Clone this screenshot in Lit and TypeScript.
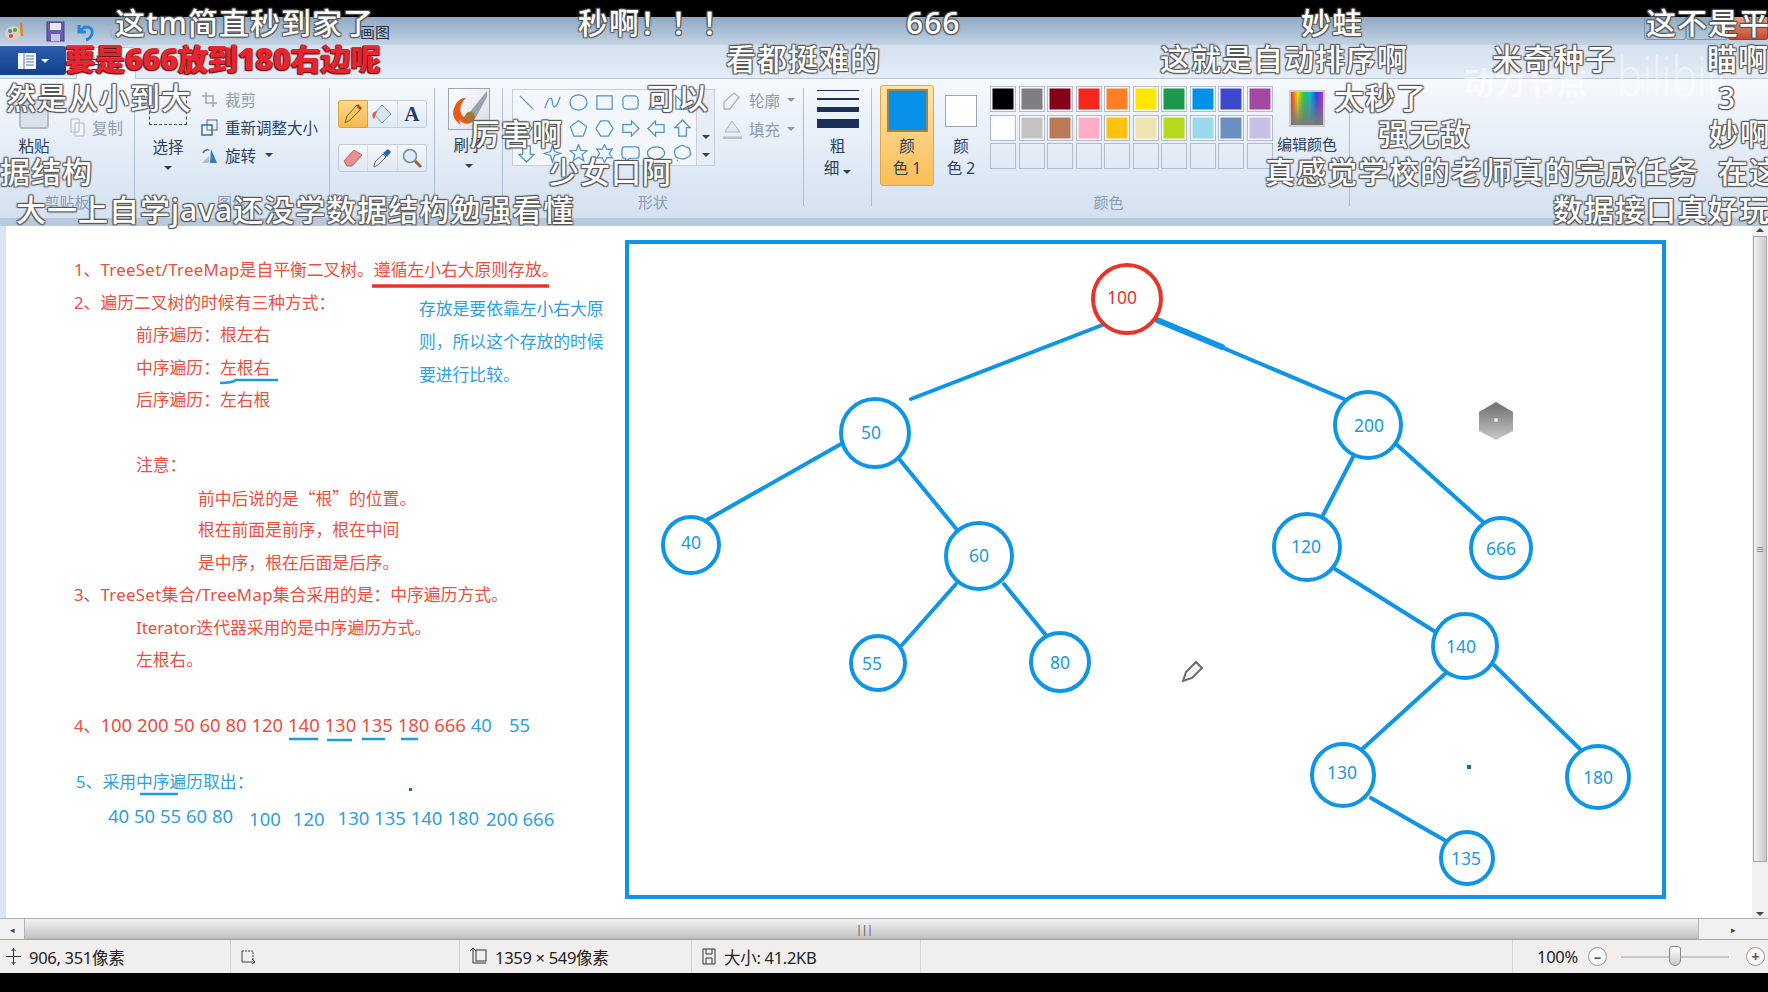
import { LitElement, html, css, svg } from 'lit';
import { customElement } from 'lit/decorators.js';

// x, row, text (row is the danmaku lane)
const DANMAKU: [number, number, string, boolean?][] = [
  [115, 0, '这tm简直秒到家了'], [578, 0, '秒啊！！！'], [906, 0, '666'], [1301, 0, '妙蛙'], [1646, 0, '这不是平'],
  [65, 1, '要是666放到180右边呢', true], [726, 1, '看都挺难的'], [1160, 1, '这就是自动排序啊'], [1492, 1, '米奇种子'], [1707, 1, '瞄啊'],
  [6, 2, '然是从小到大'], [647, 2, '可以'], [1334, 2, '太秒了'], [1718, 2, '3'],
  [470, 3, '厉害啊'], [1378, 3, '强无敌'], [1709, 3, '妙啊'],
  [0, 4, '据结构'], [549, 4, '少女口阿'], [1265, 4, '真感觉学校的老师真的完成任务'], [1718, 4, '在这'],
  [16, 5, '大一上自学java还没学数据结构勉强看懂'], [1553, 5, '数据接口真好玩'],
];
const LANES = [4, 40, 79, 115, 153, 191];

const PALETTE = [
  '#000000', '#7f7f7f', '#880015', '#f5281e', '#ff7f27', '#ffe600', '#1a9a4a', '#0091e8', '#3f48cc', '#a349a4',
  '#ffffff', '#c3c3c3', '#b97a57', '#ffaec9', '#ffc20e', '#efe4b0', '#b5d91d', '#99d9ea', '#6a8fc0', '#c8bfe7',
  ...Array(10).fill(''),
];

const EDGES = [
  [1105, 324, 911, 399], [1157, 320, 1344, 399], [841, 444, 705, 521], [900, 460, 958, 531],
  [1353, 457, 1320, 521], [1396, 444, 1483, 522], [956, 584, 902, 645], [1004, 584, 1049, 639],
  [1335, 569, 1434, 631], [1446, 673, 1359, 752], [1494, 665, 1584, 753], [1371, 798, 1446, 841],
];

// cx, cy, r, label, label x, label y
const NODES: [number, number, number, string, number, number][] = [
  [875, 433, 34, '50', 871, 432], [1368, 425, 33, '200', 1369, 425], [691, 545, 28, '40', 691, 542],
  [979, 556, 33, '60', 979, 555], [1307, 547, 33, '120', 1306, 546], [1501, 548, 30, '666', 1501, 548],
  [878, 663, 27, '55', 872, 663], [1060, 662, 29, '80', 1060, 662], [1465, 646, 32, '140', 1461, 646],
  [1343, 775, 31, '130', 1342, 772], [1598, 777, 31, '180', 1598, 777], [1467, 858, 26, '135', 1466, 858],
];

// last line of the notes: text, left margin, top margin
const INORDER: [string, number, number][] = [
  ['40 50 55 60 80', 0, 0], ['100', 16, 3], ['120', 12, 3], ['130 135 140 180', 13, 2], ['200 666', 7, 3],
];

const star = (n: number, R: number, r: number) =>
  Array.from({ length: n * 2 }, (_, i) => {
    const a = (Math.PI * i) / n - Math.PI / 2;
    const d = i % 2 ? r : R;
    return `${(10 + d * Math.cos(a)).toFixed(1)},${(10 + d * Math.sin(a)).toFixed(1)}`;
  }).join(' ');

const SHAPES = [
  svg`<path d="M3 3L17 17"/>`,
  svg`<path d="M2 16C6 3 9 3 10 10S14 17 18 4"/>`,
  svg`<ellipse cx="10" cy="10" rx="9" ry="8"/>`,
  svg`<rect x="2" y="3" width="16" height="14"/>`,
  svg`<rect x="2" y="3" width="16" height="14" rx="4"/>`,
  svg`<path d="M10 3L18 17H2Z"/>`,
  svg`<path d="M3 3V17H18Z"/>`,
  svg`<path d="M3 4L9 3L16 9L11 17H4Z"/>`,
  svg`<path d="M10 2L18 10L10 18L2 10Z"/>`,
  svg`<path d="M10 1.500L18.500 8L15 18H5L1.500 8Z"/>`,
  svg`<path d="M6 2H14L19 10L14 18H6L1 10Z"/>`,
  svg`<path d="M2 6H11V2L19 10L11 18V14H2Z"/>`,
  svg`<path d="M18 6H9V2L1 10L9 18V14H18Z"/>`,
  svg`<path d="M6 18V9H2L10 1L18 9H14V18Z"/>`,
  svg`<path d="M6 2V11H2L10 19L18 11H14V2Z"/>`,
  svg`<polygon points="${star(4, 9, 3)}"/>`,
  svg`<polygon points="${star(5, 9.5, 4)}"/>`,
  svg`<polygon points="${star(6, 9.5, 5)}"/>`,
  svg`<path d="M4 3H16Q19 3 19 6V12Q19 15 16 15H9L5 19V15H4Q1 15 1 12V6Q1 3 4 3Z"/>`,
  svg`<path d="M6 15.500A9 6.500 0 1 1 10 16L5 19Z"/>`,
  svg`<path d="M6 3Q10 0 13 3Q18 3 18 8Q20 12 15 14Q11 17 7 15Q2 15 2 10Q0 6 6 3ZM4 17L5 18"/>`,
];

@customElement('app-root')
export class AppRoot extends LitElement {
  static override styles = css`
    :host {
      display: block;
      position: relative;
      width: 1768px;
      height: 992px;
      overflow: hidden;
      background: #000;
      font-family: "Noto Sans", "Noto Sans CJK SC", sans-serif;
      color: #2b3f5e;
      font-size: 15.500px;
    }
    .window { display: flex; flex-direction: column; height: 973px; padding-top: 17px; box-sizing: border-box; }

    .title {
      height: 28px;
      flex: none;
      display: flex;
      align-items: center;
      background: linear-gradient(#8fa9c3, #c3d3e4);
      position: relative;
    }
    .quick { display: flex; align-items: center; gap: 10px; padding-left: 4px; }
    .quick svg { display: block; }
    .title-text { margin-left: 236px; font-size: 15px; color: #26323f; }
    .controls { position: absolute; right: 0; top: 0; display: flex; height: 23px; }
    .ctl { width: 42px; border: 1px solid #7f99b3; border-top: 0; border-radius: 0 0 3px 3px; box-sizing: border-box; }
    .ctl.close { width: 40px; background: linear-gradient(#e8a08a, #c8482e); border-color: #96402c; }

    .tabs { height: 34px; flex: none; display: flex; align-items: flex-end; background: linear-gradient(#d5e1ef, #e4edf7); border-bottom: 1px solid #b9c9da; box-sizing: border-box; }
    .file {
      width: 66px;
      height: 29px;
      margin-bottom: 3px;
      display: flex;
      align-items: center;
      justify-content: center;
      gap: 5px;
      background: linear-gradient(#2c5fae, #123f8c);
      border-radius: 0 3px 3px 0;
    }
    .caret { width: 0; height: 0; border: 4px solid transparent; border-top: 4px solid currentColor; border-bottom: 0; display: inline-block; }
    .file .caret { color: #fff; }
    .tab { width: 60px; height: 32px; margin-left: 10px; margin-bottom: -1px; background: #f5f8fc; border: 1px solid #b9c9da; border-bottom: 0; border-radius: 3px 3px 0 0; box-sizing: border-box; text-align: center; line-height: 30px; }

    .ribbon {
      height: 139px;
      flex: none;
      display: flex;
      box-sizing: border-box;
      padding-top: 9px;
      background: linear-gradient(#f6f9fd, #d4e1f1);
    }
    .group { height: 118px; display: flex; flex-direction: column; border-right: 1px solid #afbfd2; box-sizing: border-box; flex: none; }
    .body { flex: 1; display: flex; min-height: 0; }
    .glabel { height: 18px; line-height: 28px; text-align: center; font-size: 15px; color: #8c9db3; flex: none; }
    .col { display: flex; flex-direction: column; align-items: center; flex: none; }
    .muted { color: #8f9cad; }
    .big-label { line-height: 22px; text-align: center; }
    .row-item { height: 22px; display: flex; align-items: center; gap: 7px; white-space: nowrap; }
    .row-item svg { flex: none; }
    .stack { display: flex; flex-direction: column; gap: 6px; }

    .paste-icon { width: 30px; height: 30px; margin-top: 11px; margin-bottom: 6px; border: 2px solid #b3bdca; border-radius: 3px; background: #d9e1ea; box-sizing: border-box; }
    .select-icon { width: 38px; height: 30px; margin: 7px 0 11px; border: 1px dashed #38517a; box-sizing: border-box; }

    .tools { display: flex; flex-direction: column; gap: 16px; padding: 12px 0 0 8px; }
    .toolrow { display: flex; width: 89px; height: 28px; border: 1px solid #c0ccd9; border-radius: 3px; box-sizing: border-box; background: linear-gradient(#f5f8fc, #dfe8f3); }
    .toolrow > div { flex: 1; display: flex; align-items: center; justify-content: center; border-right: 1px solid #d3dce7; font-family: "Liberation Serif", serif; font-weight: 700; font-size: 21px; color: #20386a; }
    .toolrow > div:last-child { border-right: 0; }
    .toolrow > .on { background: linear-gradient(#fdd98b, #f7b84e); border: 1px solid #d8a545; margin: -1px 0 -1px -1px; border-radius: 3px 0 0 3px; }

    .brush { width: 42px; height: 42px; margin-bottom: 4px; border: 1px solid #9aa6b4; background: linear-gradient(135deg, #fff, #d8dde3); box-sizing: border-box; }

    .shapes { padding: 1px 0 0 9px; }
    .gallery { width: 184px; height: 77px; display: grid; grid-template-columns: repeat(7, 26px); grid-auto-rows: 25.600px; background: #f3f7fc; border: 1px solid #c4d0de; border-right: 0; box-sizing: border-box; justify-items: center; align-items: center; }
    .gallery svg { width: 19px; height: 19px; fill: none; stroke: #4d93cb; stroke-width: 1.300; }
    .scroller { width: 19px; height: 77px; border: 1px solid #c4d0de; box-sizing: border-box; display: flex; flex-direction: column; align-items: center; justify-content: flex-end; gap: 14px; padding-bottom: 8px; background: #e6edf6; color: #33435a; }
    .shape-opts { margin-left: 8px; display: flex; flex-direction: column; gap: 7px; }

    .thick-col { flex: 1; }
    .thick { display: flex; flex-direction: column; width: 42px; margin: 2px 0 0 13px; }
    .thick i { display: block; background: #1c3157; }
    .thick-label { margin-top: 7px; }

    .colors { padding-left: 8px; }
    .color-btn { width: 54px; height: 101px; margin-top: -3px; box-sizing: border-box; display: flex; flex-direction: column; align-items: center; border: 1px solid transparent; border-radius: 3px; flex: none; }
    .color-btn.on { background: linear-gradient(#ffe3a4, #fbbd57); border-color: #dca94f; }
    .swatch1 { width: 41px; height: 43px; margin-top: 3px; margin-bottom: 3px; background: #0891e8; border: 2px solid #98805a; box-sizing: border-box; }
    .swatch2 { width: 32px; height: 32px; margin: 9px 0 8px; background: #fff; border: 1px solid #9aa6b4; box-sizing: border-box; }
    .palette { margin: -2px 0 0 2px; display: grid; grid-template-columns: repeat(10, 28.500px); grid-auto-rows: 28.700px; flex: none; }
    .cell { width: 26px; height: 26px; border: 1px solid #b4bcc8; box-sizing: border-box; }
    .cell.filled { box-shadow: inset 0 0 0 1.500px #f4f7fb; }
    .edit { width: 60px; margin-left: 2px; align-items: center; display: flex; flex-direction: column; flex: none; }
    .edit-label { font-size: 15px; white-space: nowrap; }
    .rainbow { width: 36px; height: 37px; margin: 2px 0 6px; border: 2px solid #c9ced6; box-sizing: border-box; background: linear-gradient(transparent, #7a7a7a), linear-gradient(90deg, #f22, #fd0, #2c4, #0bd, #24d, #c2c); }

    .work { flex: 1; min-height: 0; display: flex; flex-direction: column; background: #dbe5f1; border-top: 8px solid #b9c8da; box-sizing: border-box; }
    .work-main { flex: 1; min-height: 0; display: flex; padding-left: 6px; }
    .canvas { flex: 1; position: relative; background: #fff; overflow: hidden; box-sizing: border-box; padding: 28px 0 0 68px; color: #e8503f; font-size: 16.800px; line-height: 32.500px; }
    .line { height: 32.500px; white-space: nowrap; }
    .i1 { padding-left: 62px; }
    .i2 { padding-left: 124px; }
    .lat { letter-spacing: 0.350px; }
    .q { font-family: "Noto Sans CJK SC", sans-serif; }
    .blue { color: #2f9fe0; }
    .digits { font-size: 18.500px; }
    .small { font-size: 16.800px; }
    .sp { margin-left: 17px; }
    .gap-a { margin-top: 24px; }
    .five { padding-left: 2px; }
    .nums { margin-top: 2px; padding-left: 34px; display: flex; align-items: flex-start; }
    .side-note { position: absolute; left: 413px; top: 66px; color: #2f9fe0; line-height: 33px; }
    .drawing { position: absolute; left: 0; top: 0; width: 1746px; height: 692px; }
    .drawing text { font-size: 17.500px; text-anchor: middle; dominant-baseline: central; fill: #1a9ae0; font-family: "Noto Sans", sans-serif; }
    .drawing text.root { fill: #e5352b; }

    .vbar { width: 16px; flex: none; background: #f0f0f0; display: flex; flex-direction: column; align-items: center; padding: 2px 0; box-sizing: border-box; color: #444; }
    .vthumb { width: 14px; height: 626px; margin-top: 4px; background: linear-gradient(90deg, #f2f2f2, #c8c8c8); border: 1px solid #a9a9a9; box-sizing: border-box; display: flex; align-items: center; justify-content: center; font-size: 9px; color: #555; }
    .vspace { flex: 1; }
    .up { transform: rotate(180deg); }
    .hbar { height: 21px; flex: none; display: flex; align-items: center; background: #f0f0f0; border-top: 1px solid #b0b0b0; box-sizing: border-box; color: #444; }
    .harrow { width: 24px; text-align: center; font-size: 9px; flex: none; }
    .hthumb { flex: 1; height: 20px; background: linear-gradient(#f2f2f2, #c4c4c4); border: 1px solid #b4b4b4; border-top: 0; box-sizing: border-box; display: flex; justify-content: center; align-items: center; padding-left: 6px; font-size: 10px; }
    .harrow.right { width: 69px; }

    .status { height: 34px; flex: none; display: flex; align-items: center; background: #f1efee; border-top: 1px solid #a6a6a6; box-sizing: border-box; font-size: 16.500px; letter-spacing: -0.300px; color: #222; }
    .cell-s { height: 100%; display: flex; align-items: center; gap: 8px; padding-left: 6px; box-sizing: border-box; border-right: 1px solid #d6d4d2; flex: none; }
    .s1 { width: 231px; }
    .s2 { width: 229px; padding-left: 8px; }
    .s3 { width: 232px; padding-left: 10px; }
    .s4 { width: 229px; padding-left: 10px; }
    .s5 { width: 592px; }
    .zoom { flex: 1; display: flex; align-items: center; padding-left: 24px; }
    .round { width: 19px; height: 19px; border: 1px solid #999; border-radius: 50%; display: flex; align-items: center; justify-content: center; font-weight: 700; font-size: 14px; color: #555; box-sizing: border-box; background: #f6f6f6; }
    .minus { margin-left: 10px; }
    .track { position: relative; width: 108px; height: 2px; background: #c8c8c8; margin: 0 17px 0 14px; }
    .knob { position: absolute; left: 48px; top: -10px; width: 12px; height: 20px; border: 1px solid #8a8a8a; border-radius: 3px 3px 6px 6px; background: linear-gradient(#fff, #c9c9c9); box-sizing: border-box; }

    .danmaku { position: absolute; white-space: nowrap; font-size: 30px; line-height: 38px; letter-spacing: 1px; font-weight: 500; color: #fff; text-shadow: 1px 1px 1px #555, -1px -1px 1px #555, 1px -1px 1px #555, -1px 1px 1px #555; }
    .danmaku.red { color: #e8252f; font-weight: 900; letter-spacing: 0; text-shadow: 1px 1px 1px #611, -1px 1px 1px #611; }
    .mark { position: absolute; color: #fff; white-space: nowrap; }
    .mark.a { left: 1463px; top: 60px; font-size: 31px; line-height: 44px; font-weight: 700; opacity: 0.5; }
    .mark.b { left: 1617px; top: 47px; font-size: 42px; line-height: 55px; font-weight: 300; opacity: 0.4; transform: scaleY(1.300); }
  `;

  private renderDrawing() {
    return svg`
      <svg class="drawing" viewBox="6 226 1746 692">
        <defs>
          <linearGradient id="hex" x1="0" y1="0" x2="0" y2="1">
            <stop offset="0" stop-color="#6c6c6c"/>
            <stop offset="1" stop-color="#c9c9c9"/>
          </linearGradient>
        </defs>
        <rect x="627" y="242" width="1037" height="655" fill="none" stroke="#0f95e6" stroke-width="4"/>
        <path d="M372 286H549" stroke="#e5352b" stroke-width="3.500"/>
        <g stroke="#1a9ae0" stroke-width="2.500" fill="none">
          <path d="M220 383Q232 383 236 380H278"/>
          <path d="M289 739H318M327 740H352M362 739H385M401 739H418M140 794H178"/>
        </g>
        <g stroke="#0f95e6" stroke-width="4" stroke-linecap="round">
          ${EDGES.map(([a, b, c, d]) => svg`<line x1=${a} y1=${b} x2=${c} y2=${d}/>`)}
          <line x1="1157" y1="320" x2="1222" y2="347" stroke-width="6"/>
        </g>
        <circle cx="1127" cy="299" r="34" fill="#fff" stroke="#e5352b" stroke-width="4"/>
        <text class="root" x="1122" y="297">100</text>
        ${NODES.map(([x, y, r, t, tx, ty]) => svg`
          <circle cx=${x} cy=${y} r=${r} fill="#fff" stroke="#0f95e6" stroke-width="4"/>
          <text x=${tx} y=${ty}>${t}</text>`)}
        <rect x="1467" y="765" width="4" height="4" fill="#0b6fa8"/>
        <rect x="409" y="788" width="3" height="3" fill="#0b6fa8"/>
        <path d="M1496 402L1513 412V431L1496 440L1479 431V412Z" fill="url(#hex)"/>
        <circle cx="1496" cy="420" r="2" fill="#e4e4e4"/>
        <path d="M1183 681L1186 672L1196 662L1202 668L1192 678Z" fill="#f4f4f4" stroke="#6a6a6a" stroke-width="2"/>
      </svg>`;
  }

  override render() {
    return html`
      <div class="window">
        <div class="title">
          <div class="quick">
            <svg width="20" height="22" viewBox="0 0 20 22"><ellipse cx="9" cy="13" rx="8" ry="7" fill="#d9d0b8"/><circle cx="6" cy="11" r="2" fill="#3a8fd8"/><circle cx="11" cy="10" r="2" fill="#4a4"/><circle cx="7" cy="16" r="2" fill="#d44"/><path d="M17 3L18 16" stroke="#d78a1e" stroke-width="2.500"/></svg>
            <svg style="margin-left:12px" width="19" height="21" viewBox="0 0 19 21"><rect x="1" y="1" width="17" height="19" fill="#6d5bb0" stroke="#4a3a86"/><rect x="4" y="2" width="11" height="7" fill="#e8e8f4"/><rect x="5" y="13" width="9" height="7" fill="#c9c4e2"/></svg>
            <svg style="margin-left:2px" width="18" height="21" viewBox="0 0 18 21"><path d="M2 4V11H9M3 10C8 3 17 6 15 13C14 16 12 18 9 19" fill="none" stroke="#2b86d8" stroke-width="3"/></svg>
            <svg style="margin-left:3px" width="16" height="21" viewBox="0 0 18 21"><path d="M16 4V11H9M15 10C10 3 1 6 3 13C4 16 6 18 9 19" fill="none" stroke="#a9b7c6" stroke-width="3"/></svg>
          </div>
          <span class="title-text">画图</span>
          <div class="controls"><div class="ctl"></div><div class="ctl"></div><div class="ctl close"></div></div>
        </div>

        <div class="tabs">
          <div class="file">
            <svg width="18" height="16" viewBox="0 0 18 16"><rect width="18" height="16" fill="#f4f7fb"/><path d="M6 0V16M8 3H16M8 6H16M8 9H16M8 12H16" stroke="#5a7db0"/></svg>
            <span class="caret"></span>
          </div>
          <div class="tab">主页</div>
        </div>

        <div class="ribbon">
          <div class="group" style="width:135px">
            <div class="body">
              <div class="col" style="width:68px">
                <div class="paste-icon"></div>
                <div class="big-label">粘贴</div>
              </div>
              <div class="stack muted" style="padding:28px 0 0 2px">
                <div class="row-item">
                  <svg width="15" height="19" viewBox="0 0 15 19"><path d="M1 1H9V14H1ZM5 5H14V18H5Z" fill="#f4f6f9" stroke="#aeb7c3"/></svg>复制
                </div>
              </div>
            </div>
            <div class="glabel">剪贴板</div>
          </div>

          <div class="group" style="width:195px">
            <div class="body">
              <div class="col" style="width:66px">
                <div class="select-icon"></div>
                <div class="big-label">选择</div>
                <span class="caret" style="margin-top:8px"></span>
              </div>
              <div class="stack">
                <div class="row-item muted">
                  <svg width="17" height="17" viewBox="0 0 17 17"><path d="M5 1V12H16M1 5H12V16" fill="none" stroke="#9aa7b6" stroke-width="1.500"/></svg>裁剪
                </div>
                <div class="row-item">
                  <svg width="17" height="17" viewBox="0 0 17 17"><rect x="1" y="6" width="10" height="10" fill="#f5f8fc" stroke="#2b6fb8" stroke-width="1.500"/><rect x="6" y="1" width="10" height="10" fill="none" stroke="#5a6b80"/></svg>重新调整大小
                </div>
                <div class="row-item">
                  <svg width="17" height="17" viewBox="0 0 17 17"><path d="M1 16L8 9V16Z" fill="#b9b9b9"/><path d="M10 2L16 16H9Z" fill="#2b7fd0"/><path d="M2 6Q4 2 8 3" fill="none" stroke="#2b7fd0" stroke-width="1.500"/></svg>旋转
                  <span class="caret" style="margin-left:2px"></span>
                </div>
              </div>
            </div>
            <div class="glabel">图像</div>
          </div>

          <div class="group" style="width:105px">
            <div class="body">
              <div class="tools">
                <div class="toolrow">
                  <div class="on"><svg width="20" height="22" viewBox="0 0 20 22"><path d="M2 20L4 13L14 2L18 6L7 17Z" fill="#f7c94b" stroke="#8a5a20"/><path d="M14 2L18 6" stroke="#c8402e" stroke-width="3"/></svg></div>
                  <div><svg width="22" height="22" viewBox="0 0 22 22"><path d="M11 2L20 11L11 20L3 11Z" fill="#d5e6f5" stroke="#7f9ab8"/><path d="M3 9C0 12 2 15 3 16C5 13 4 11 7 8Z" fill="#e2622a"/></svg></div>
                  <div>A</div>
                </div>
                <div class="toolrow">
                  <div><svg width="22" height="20" viewBox="0 0 22 20"><path d="M2 13L12 2L20 7L10 18H5Z" fill="#ec8f8c" stroke="#b06a68"/></svg></div>
                  <div><svg width="22" height="22" viewBox="0 0 22 22"><path d="M3 20L4 15L12 7L15 10L7 18Z" fill="#e8eef5" stroke="#667"/><path d="M12 6L17 2L20 5L16 10Z" fill="#2a63b0"/></svg></div>
                  <div><svg width="22" height="22" viewBox="0 0 22 22"><circle cx="9" cy="9" r="6.500" fill="#dcebf7" stroke="#7a8898" stroke-width="1.500"/><path d="M14 14L20 20" stroke="#9a6a32" stroke-width="3"/></svg></div>
                </div>
              </div>
            </div>
            <div class="glabel">工具</div>
          </div>

          <div class="group" style="width:68px">
            <div class="body">
              <div class="col" style="width:68px">
                <div class="brush">
                  <svg width="40" height="40" viewBox="0 0 40 40"><path d="M38 2L20 24L26 30L38 8Z" fill="#9aa4b0"/><path d="M18 24C22 20 28 26 25 31C22 36 14 36 11 31C10 33 12 36 12 36C7 33 1 26 6 17C8 12 14 8 17 9C11 14 9 24 15 28Z" fill="#e8591c"/><path d="M18 24C22 20 28 26 25 31C22 35 17 33 16 30Z" fill="#a5773d"/></svg>
                </div>
                <div class="big-label">刷子</div>
                <span class="caret" style="margin-top:8px"></span>
              </div>
            </div>
          </div>

          <div class="group" style="width:301px">
            <div class="body shapes">
              <div class="gallery">
                ${SHAPES.map(s => svg`<svg viewBox="0 0 20 20">${s}</svg>`)}
              </div>
              <div class="scroller"><span class="caret"></span><span class="caret"></span></div>
              <div class="shape-opts muted">
                <div class="row-item">
                  <svg width="19" height="19" viewBox="0 0 19 19"><path d="M1 18V11L11 2L16 6L7 18Z" fill="none" stroke="#a9b4c2" stroke-width="1.300"/></svg>轮廓<span class="caret"></span>
                </div>
                <div class="row-item">
                  <svg width="19" height="19" viewBox="0 0 19 19"><path d="M9 1L17 12H2Z" fill="#e4eaf2" stroke="#a9b4c2"/><path d="M0 18H19" stroke="#b7c1cd" stroke-width="3"/></svg>填充<span class="caret"></span>
                </div>
              </div>
            </div>
            <div class="glabel">形状</div>
          </div>

          <div class="group" style="width:68px">
            <div class="body">
              <div class="thick-col">
                <div class="thick">
                  <i style="height:1px;margin-bottom:7px"></i>
                  <i style="height:2px;margin-bottom:7px"></i>
                  <i style="height:5px;margin-bottom:7px"></i>
                  <i style="height:9px"></i>
                </div>
                <div class="big-label thick-label">粗</div>
                <div class="big-label">细 <span class="caret"></span></div>
              </div>
            </div>
          </div>

          <div class="group colors" style="width:478px">
            <div class="body">
              <div class="color-btn on">
                <div class="swatch1"></div>
                <div class="big-label">颜</div>
                <div class="big-label">色 1</div>
              </div>
              <div class="color-btn">
                <div class="swatch2"></div>
                <div class="big-label">颜</div>
                <div class="big-label">色 2</div>
              </div>
              <div class="palette">
                ${PALETTE.map(
                  c => html`<div class="cell ${c ? 'filled' : ''}" style=${c ? `background:${c}` : ''}></div>`,
                )}
              </div>
              <div class="edit">
                <div class="rainbow"></div>
                <div class="big-label edit-label">编辑颜色</div>
              </div>
            </div>
            <div class="glabel" style="padding-right:12px">颜色</div>
          </div>
        </div>

        <div class="work">
          <div class="work-main">
            <div class="canvas">
              <div class="line">1、<span class="lat">TreeSet/TreeMap</span>是自平衡二叉树。遵循左小右大原则存放。</div>
              <div class="line">2、遍历二叉树的时候有三种方式：</div>
              <div class="line i1">前序遍历：根左右</div>
              <div class="line i1">中序遍历：左根右</div>
              <div class="line i1">后序遍历：左右根</div>
              <div class="line"></div>
              <div class="line i1">注意：</div>
              <div class="line i2 q">前中后说的是“根”的位置。</div>
              <div class="line i2">根在前面是前序，根在中间</div>
              <div class="line i2">是中序，根在后面是后序。</div>
              <div class="line">3、<span class="lat">TreeSet</span>集合/<span class="lat">TreeMap</span>集合采用的是：中序遍历方式。</div>
              <div class="line i1">Iterator迭代器采用的是中序遍历方式。</div>
              <div class="line i1">左根右。</div>
              <div class="line"></div>
              <div class="line"><span class="small">4、</span><span class="digits">100 200 50 60 80 120 140 130 135 180 666 <span class="blue">40</span><span class="blue sp">55</span></span></div>
              <div class="line blue gap-a five">5、采用中序遍历取出：</div>
              <div class="line blue nums digits">
                ${INORDER.map(([t, ml, mt]) => html`<span style="margin-left:${ml}px;margin-top:${mt}px">${t}</span>`)}
              </div>
              <div class="side-note">存放是要依靠左小右大原<br />则，所以这个存放的时候<br />要进行比较。</div>
              ${this.renderDrawing()}
            </div>
            <div class="vbar"><span class="caret up"></span><div class="vthumb">≡</div><div class="vspace"></div><span class="caret"></span></div>
          </div>
          <div class="hbar">
            <div class="harrow">◂</div>
            <div class="hthumb">|||</div>
            <div class="harrow right">▸</div>
          </div>
          <div class="status">
            <div class="cell-s s1">
              <svg width="15" height="17" viewBox="0 0 15 17"><path d="M7.500 0V17M0 8.500H15M5.500 3L7.500 1L9.500 3M5.500 14L7.500 16L9.500 14" fill="none" stroke="#333"/></svg>
              <span>906, 351像素</span>
            </div>
            <div class="cell-s s2">
              <svg width="17" height="17" viewBox="0 0 17 17"><path d="M3 3H14V13" fill="none" stroke="#444" stroke-dasharray="2 1"/><path d="M3 3V14H16M13 11L16 14L13 16" fill="none" stroke="#444"/></svg>
            </div>
            <div class="cell-s s3">
              <svg width="17" height="17" viewBox="0 0 17 17"><path d="M3 0V15M0 3L3 0L6 3" fill="none" stroke="#333"/><rect x="6" y="2" width="10" height="11" fill="none" stroke="#333"/><path d="M3 15H16" stroke="#333"/></svg>
              <span>1359 × 549像素</span>
            </div>
            <div class="cell-s s4">
              <svg width="14" height="17" viewBox="0 0 14 17"><path d="M1 1H13V16H1ZM4 1V6H10V1M4 16V10H10V16" fill="none" stroke="#333"/></svg>
              <span>大小: 41.2KB</span>
            </div>
            <div class="cell-s s5"></div>
            <div class="zoom">
              <span>100%</span>
              <div class="round minus">–</div>
              <div class="track"><div class="knob"></div></div>
              <div class="round">+</div>
            </div>
          </div>
        </div>
      </div>

      <div class="mark a">动力节点</div>
      <div class="mark b">bilibili</div>
      ${DANMAKU.map(
        ([x, lane, text, red]) =>
          html`<div class="danmaku ${red ? 'red' : ''}" style="left:${x}px;top:${LANES[lane]}px">${text}</div>`,
      )}
    `;
  }
}
